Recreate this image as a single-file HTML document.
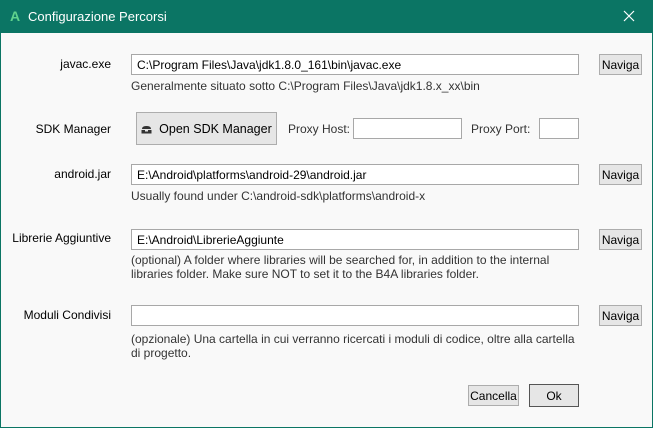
<!DOCTYPE html>
<html><head><style>
body{margin:0;width:653px;height:428px;overflow:hidden;font-family:"Liberation Sans",sans-serif;font-size:12px;color:#000}
.win{position:absolute;left:0;top:0;width:651px;height:426px;border:1px solid #0b7564;background:#f9f9f9}
.title{position:absolute;left:0;top:0;width:653px;height:33px;background:#0b7564;color:#fff}
.a{position:absolute}
.lbl{position:absolute;right:542px;text-align:right;white-space:nowrap}
.inp{position:absolute;background:#fff;border:1px solid #a8a8a8;box-sizing:border-box;height:21px;padding:3px 0 0 5px;white-space:nowrap}
.btn{position:absolute;background:#e6e6e6;border:1px solid #adadad;box-sizing:border-box;text-align:center;white-space:nowrap}
.help{position:absolute;left:131px;color:#333;white-space:nowrap;line-height:14px}
</style></head><body>
<div class="win"></div>
<div class="title">
<span class="a" style="left:10px;top:8px;font-weight:bold;font-size:14px;color:#5fd38d">A</span>
<span class="a" style="left:28px;top:9px;font-size:13px">Configurazione Percorsi</span>
<svg class="a" style="left:623px;top:10px" width="12" height="12"><path d="M1 1L11 11M11 1L1 11" stroke="#fff" stroke-width="1.2"/></svg>
</div>

<div class="lbl" style="top:57px">javac.exe</div>
<div class="inp" style="left:131px;top:54px;width:448px">C:\Program Files\Java\jdk1.8.0_161\bin\javac.exe</div>
<div class="btn" style="left:599px;top:54px;width:43px;height:21px;padding-top:3px">Naviga</div>
<div class="help" style="top:79px">Generalmente situato sotto C:\Program Files\Java\jdk1.8.x_xx\bin</div>

<div class="lbl" style="top:122px">SDK Manager</div>
<div class="btn" style="left:136px;top:112px;width:141px;height:33px;padding-top:9px;font-size:12.5px"><svg width="11" height="9" style="vertical-align:-1px"><path d="M1 4Q1 1 5.5 1Q10 1 10 4Z M0.5 5H10.5V8.5H0.5Z" fill="#333"/><rect x="4" y="5" width="3" height="1.5" fill="#e6e6e6"/></svg>&nbsp; Open SDK Manager</div>
<div class="a" style="left:288px;top:122px;color:#333">Proxy Host:</div>
<div class="inp" style="left:353px;top:118px;width:109px"></div>
<div class="a" style="left:471px;top:122px;color:#333">Proxy Port:</div>
<div class="inp" style="left:539px;top:118px;width:40px"></div>

<div class="lbl" style="top:167px">android.jar</div>
<div class="inp" style="left:131px;top:164px;width:448px">E:\Android\platforms\android-29\android.jar</div>
<div class="btn" style="left:599px;top:164px;width:43px;height:21px;padding-top:3px">Naviga</div>
<div class="help" style="top:189px">Usually found under C:\android-sdk\platforms\android-x</div>

<div class="lbl" style="top:231px">Librerie Aggiuntive</div>
<div class="inp" style="left:131px;top:229px;width:448px">E:\Android\LibrerieAggiunte</div>
<div class="btn" style="left:599px;top:229px;width:43px;height:21px;padding-top:3px">Naviga</div>
<div class="help" style="top:253px">(optional) A folder where libraries will be searched for, in addition to the internal<br>libraries folder. Make sure NOT to set it to the B4A libraries folder.</div>

<div class="lbl" style="top:308px">Moduli Condivisi</div>
<div class="inp" style="left:131px;top:305px;width:448px"></div>
<div class="btn" style="left:599px;top:305px;width:43px;height:21px;padding-top:3px">Naviga</div>
<div class="help" style="top:332px">(opzionale) Una cartella in cui verranno ricercati i moduli di codice, oltre alla cartella<br>di progetto.</div>

<div class="btn" style="left:468px;top:385px;width:51px;height:21px;padding-top:3px">Cancella</div>
<div class="btn" style="left:529px;top:384px;width:50px;height:23px;padding-top:4px;border-color:#555">Ok</div>
</body></html>
